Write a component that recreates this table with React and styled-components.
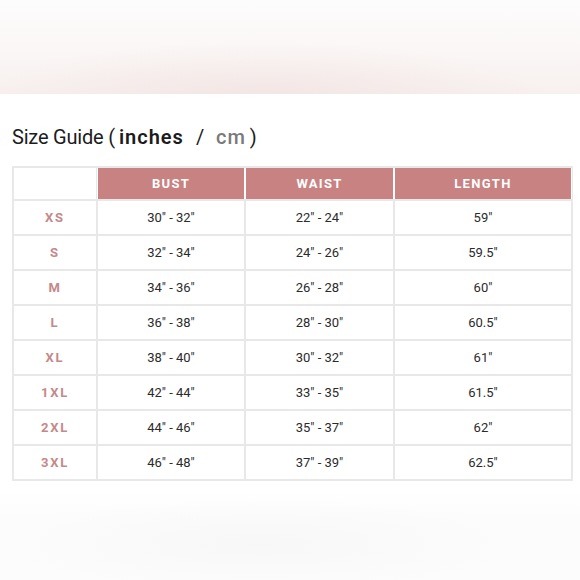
import React from "react";
import styled, { createGlobalStyle } from "styled-components";

const GlobalStyle = createGlobalStyle`
  html, body {
    margin: 0;
    padding: 0;
    background: #ffffff;
  }
  body {
    font-family: Roboto, "Liberation Sans", Arial, sans-serif;
  }
`;

const Page = styled.div`
  width: 580px;
  height: 580px;
  display: flex;
  flex-direction: column;
  overflow: hidden;
  background: #ffffff;
`;

// blurred product photo strip at the top
const TopBand = styled.div`
  height: 94px;
  flex-shrink: 0;
  background:
    radial-gradient(ellipse 65% 80% at 45% 105%, rgba(242, 228, 226, 0.85), rgba(242, 228, 226, 0) 75%),
    linear-gradient(to bottom, #fdfcfc 0%, #faf6f5 60%, #f7f0ef 100%);
`;

const Title = styled.h2`
  margin: 31px 0 0 12px;
  font-size: 20px;
  line-height: 24px;
  font-weight: 400;
  color: #1c1c1c;
  letter-spacing: -0.2px;
`;

const Unit = styled.span`
  font-weight: ${(props) => (props.active ? 600 : 500)};
  color: ${(props) => (props.active ? "#1c1c1c" : "#7a7a7a")};
  letter-spacing: 1px;
  margin: 0 4px;
`;

const Slash = styled.span`
  margin: 0 8px;
`;

const Table = styled.div`
  margin: 17px 0 0 12px;
  width: fit-content;
  display: grid;
  grid-template-columns: 82px 146px 147px 176px;
  grid-auto-rows: 33px;
  grid-template-rows: 31px;
  gap: 2px;
  padding: 2px;
  background: #e8e8e8;
`;

const Cell = styled.div`
  display: flex;
  align-items: center;
  justify-content: center;
  background: #ffffff;
  font-size: 13px;
  color: #2b2b2b;
`;

const HeadCell = styled(Cell)`
  background: ${(props) => (props.empty ? "#ffffff" : "#c98282")};
  box-shadow: ${(props) => (props.empty ? "none" : "1px 0 0 #ffffff, -1px 0 0 #ffffff")};
  color: #ffffff;
  font-size: 13px;
  font-weight: 700;
  letter-spacing: 1.3px;
`;

const SizeCell = styled(Cell)`
  color: #c48988;
  font-weight: 700;
  font-size: 13px;
  letter-spacing: 1.8px;
`;

const BottomBlur = styled.div`
  flex: 1;
  margin-top: 10px;
  background:
    radial-gradient(ellipse 60% 70% at 45% 60%, rgba(247, 247, 247, 0.9), rgba(252, 252, 252, 0) 75%),
    linear-gradient(to bottom, #ffffff 0%, #fcfcfc 30%, #fcfcfc 100%);
`;

const sizes = [
  { size: "XS", bust: "30\" - 32\"", waist: "22\" - 24\"", length: "59\"" },
  { size: "S", bust: "32\" - 34\"", waist: "24\" - 26\"", length: "59.5\"" },
  { size: "M", bust: "34\" - 36\"", waist: "26\" - 28\"", length: "60\"" },
  { size: "L", bust: "36\" - 38\"", waist: "28\" - 30\"", length: "60.5\"" },
  { size: "XL", bust: "38\" - 40\"", waist: "30\" - 32\"", length: "61\"" },
  { size: "1XL", bust: "42\" - 44\"", waist: "33\" - 35\"", length: "61.5\"" },
  { size: "2XL", bust: "44\" - 46\"", waist: "35\" - 37\"", length: "62\"" },
  { size: "3XL", bust: "46\" - 48\"", waist: "37\" - 39\"", length: "62.5\"" },
];

export default function App() {
  return (
    <Page>
      <GlobalStyle />
      <TopBand />
      <Title>
        Size Guide (<Unit active>inches</Unit>
        <Slash>/</Slash>
        <Unit>cm</Unit>)
      </Title>
      <Table>
        <HeadCell empty />
        <HeadCell>BUST</HeadCell>
        <HeadCell>WAIST</HeadCell>
        <HeadCell>LENGTH</HeadCell>
        {sizes.map((row) => (
          <React.Fragment key={row.size}>
            <SizeCell>{row.size}</SizeCell>
            <Cell>{row.bust}</Cell>
            <Cell>{row.waist}</Cell>
            <Cell>{row.length}</Cell>
          </React.Fragment>
        ))}
      </Table>
      <BottomBlur />
    </Page>
  );
}
